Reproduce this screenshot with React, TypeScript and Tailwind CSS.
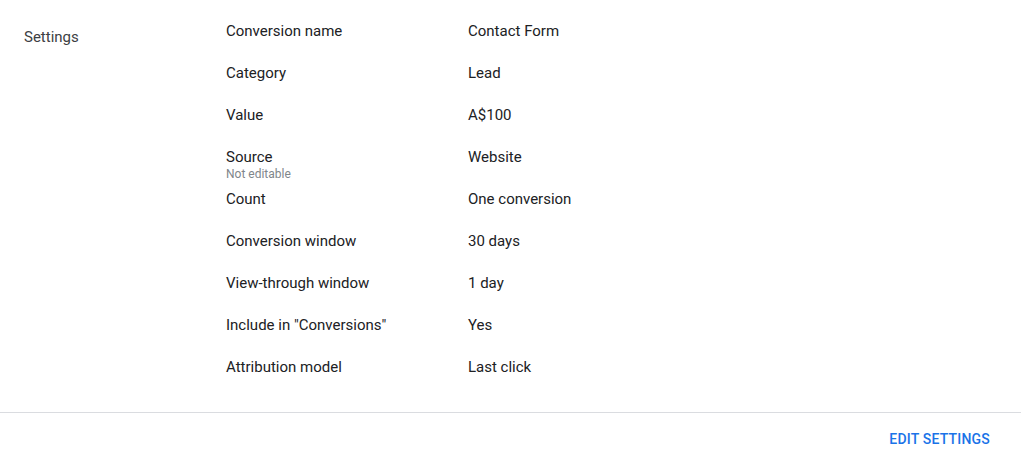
const rows: { label: string; sub?: string; value: string }[] = [
  { label: "Conversion name", value: "Contact Form" },
  { label: "Category", value: "Lead" },
  { label: "Value", value: "A$100" },
  { label: "Source", sub: "Not editable", value: "Website" },
  { label: "Count", value: "One conversion" },
  { label: "Conversion window", value: "30 days" },
  { label: "View-through window", value: "1 day" },
  { label: 'Include in "Conversions"', value: "Yes" },
  { label: "Attribution model", value: "Last click" },
];

export default function App() {
  return (
    <div
      className="w-[1021px] h-[465px] bg-white text-[15px] leading-[20px] text-[#202124]"
      style={{ fontFamily: "Roboto, 'Liberation Sans', sans-serif" }}
    >
      <div className="flex pt-[21px] h-[391px] border-b border-[#dadce0] box-content">
        <div className="w-[226px] pl-[24px] pt-[6px] text-[#3c4043]">Settings</div>
        <div className="flex flex-col">
          {rows.map((r) => (
            <div key={r.label} className="flex h-[42px]">
              <div className="w-[242px] flex flex-col">
                <span>{r.label}</span>
                {r.sub && (
                  <span className="text-[12px] leading-[12px] text-[#80868b] mt-[1px]">{r.sub}</span>
                )}
              </div>
              <div>{r.value}</div>
            </div>
          ))}
        </div>
      </div>
      <div className="flex justify-end pr-[31px] pt-[16px]">
        <button className="text-[14px] font-medium text-[#1a73e8] tracking-[0.2px] leading-[20px]">
          EDIT SETTINGS
        </button>
      </div>
    </div>
  );
}
